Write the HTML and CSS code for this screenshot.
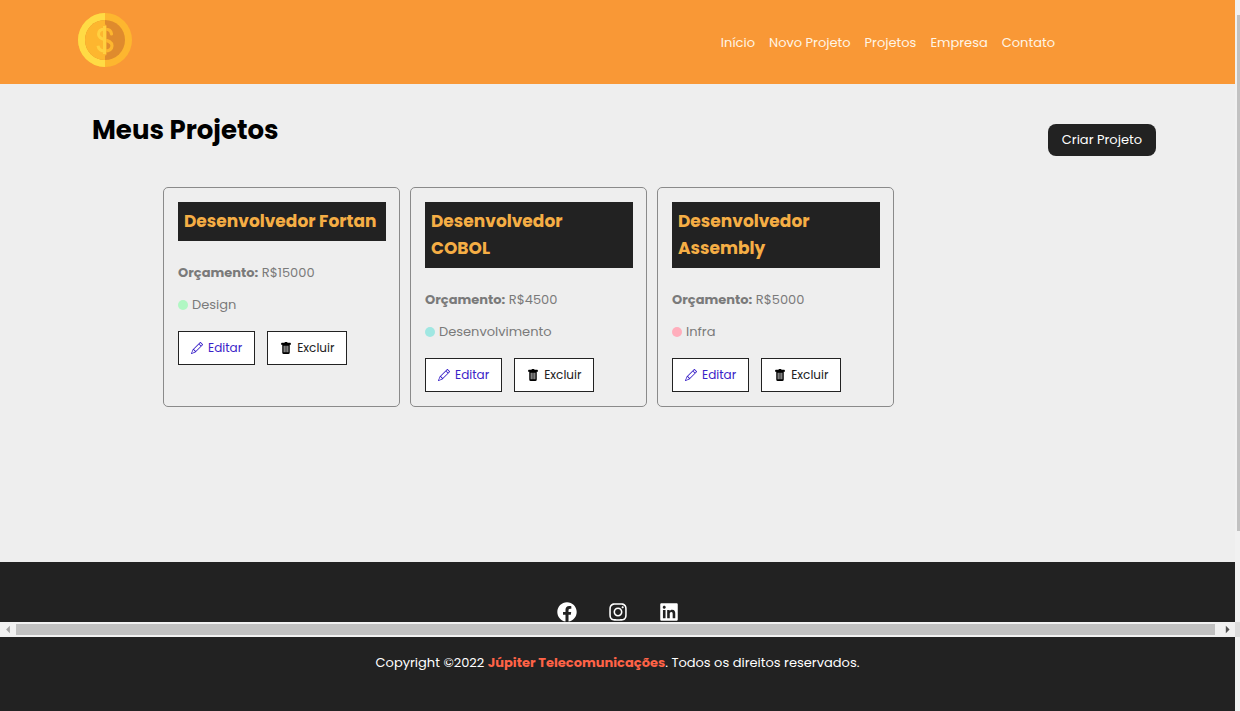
FILE: index.html
```html
<!DOCTYPE html>
<html lang="pt-BR">
<head>
<meta charset="utf-8">
<title>Costs</title>
<link rel="stylesheet" href="styles.css">
</head>
<body>
<svg class="sprite" aria-hidden="true">
  <symbol id="pencil" viewBox="0 0 16 16"><path d="M12.146.146a.5.5 0 0 1 .708 0l3 3a.5.5 0 0 1 0 .708l-10 10a.5.5 0 0 1-.168.11l-5 2a.5.5 0 0 1-.65-.65l2-5a.5.5 0 0 1 .11-.168l10-10zM11.207 2.5 13.5 4.793 14.793 3.5 12.5 1.207 11.207 2.5zm1.586 3L10.5 3.207 4 9.707V10h.5a.5.5 0 0 1 .5.5v.5h.5a.5.5 0 0 1 .5.5v.5h.293l6.5-6.5zm-9.761 5.175-.106.106-1.528 3.821 3.821-1.528.106-.106A.5.5 0 0 1 5 12.5V12h-.5a.5.5 0 0 1-.5-.5V11h-.5a.5.5 0 0 1-.468-.325z"/></symbol>
  <symbol id="trash" viewBox="0 0 16 16"><path d="M2.500 1a1 1 0 0 0-1 1v1.500h1.500V14a2 2 0 0 0 2 2h6a2 2 0 0 0 2-2V3.500h1.500V2a1 1 0 0 0-1-1H10a1 1 0 0 0-1-1H7a1 1 0 0 0-1 1zM5 5h1v8.500H5zM7.500 5h1v8.500h-1zM10 5h1v8.500h-1z" fill-rule="evenodd"/></symbol>
</svg>
<div class="window">
  <div class="page">
    <header class="navbar">
      <a class="logo" href="#" aria-label="Costs">
        <svg viewBox="0 0 54 54" width="54" height="54">
          <circle cx="27" cy="27" r="27" fill="#fdb62f"/>
          <path d="M27 0a27 27 0 0 0 0 54z" fill="#ffdb45"/>
          <circle cx="27" cy="27" r="20" fill="#df8b2d"/>
          <path d="M27 7a20 20 0 0 0 0 40z" fill="#fdb62f"/>
          <path d="M33.500 21C33 17.500 30.500 16 27 16c-4 0-6.500 2-6.500 5.200 0 7.300 13.500 4.300 13.500 11.600 0 3.200-2.800 5.200-7 5.200-4 0-6.500-2-7-5.300M27 13v28" fill="none" stroke="#fdb62f" stroke-width="3.200" stroke-linecap="round"/>
          <path d="M27 16c-4 0-6.500 2-6.500 5.200 0 3.700 3.500 4.700 6.500 5.600M27 38c-4 0-6.500-2-7-5.300M26.500 13v28" fill="none" stroke="#ffd040" stroke-width="3"/>
        </svg>
      </a>
      <nav class="menu">
        <a href="#">Início</a>
        <a href="#">Novo Projeto</a>
        <a href="#">Projetos</a>
        <a href="#">Empresa</a>
        <a href="#">Contato</a>
      </nav>
    </header>
    <main class="content">
      <div class="title-row">
        <h1 class="title">Meus Projetos</h1>
        <a class="create" href="#">Criar Projeto</a>
      </div>
      <div class="cards">
        <article class="card">
          <h2 class="card-title">Desenvolvedor Fortan</h2>
          <p class="budget"><strong>Orçamento:</strong> R$15000</p>
          <p class="category"><span class="dot design"></span>Design</p>
          <div class="actions">
            <a class="action edit" href="#"><svg class="icon"><use href="#pencil"/></svg>Editar</a>
            <button class="action" type="button"><svg class="icon"><use href="#trash"/></svg>Excluir</button>
          </div>
        </article>
        <article class="card">
          <h2 class="card-title">Desenvolvedor<br>COBOL</h2>
          <p class="budget"><strong>Orçamento:</strong> R$4500</p>
          <p class="category"><span class="dot development"></span>Desenvolvimento</p>
          <div class="actions">
            <a class="action edit" href="#"><svg class="icon"><use href="#pencil"/></svg>Editar</a>
            <button class="action" type="button"><svg class="icon"><use href="#trash"/></svg>Excluir</button>
          </div>
        </article>
        <article class="card">
          <h2 class="card-title">Desenvolvedor<br>Assembly</h2>
          <p class="budget"><strong>Orçamento:</strong> R$5000</p>
          <p class="category"><span class="dot infra"></span>Infra</p>
          <div class="actions">
            <a class="action edit" href="#"><svg class="icon"><use href="#pencil"/></svg>Editar</a>
            <button class="action" type="button"><svg class="icon"><use href="#trash"/></svg>Excluir</button>
          </div>
        </article>
      </div>
    </main>
    <footer class="footer">
      <div class="social">
        <a href="#" aria-label="Facebook"><svg viewBox="0 0 512 512" width="20" height="20"><path d="M504 256C504 119 393 8 256 8S8 119 8 256c0 123.780 90.690 226.380 209.250 245V327.690h-63V256h63v-54.640c0-62.150 37-96.480 93.670-96.480 27.140 0 55.520 4.840 55.520 4.840v61h-31.280c-30.800 0-40.410 19.120-40.410 38.730V256h68.780l-11 71.690h-57.780V501C413.310 482.380 504 379.780 504 256z"/></svg></a>
        <a href="#" aria-label="Instagram"><svg viewBox="0 0 448 512" width="20" height="20"><path d="M224.100 141c-63.600 0-114.900 51.300-114.900 114.900s51.300 114.900 114.900 114.900S339 319.500 339 255.900 287.700 141 224.100 141zm0 189.600c-41.100 0-74.700-33.500-74.700-74.700s33.500-74.700 74.700-74.700 74.700 33.500 74.700 74.700-33.600 74.700-74.700 74.700zm146.400-194.300c0 14.900-12 26.800-26.800 26.800-14.900 0-26.800-12-26.800-26.800s12-26.800 26.800-26.800 26.800 12 26.800 26.800zm76.100 27.200c-1.700-35.900-9.900-67.700-36.200-93.900-26.200-26.200-58-34.400-93.900-36.200-37-2.100-147.900-2.100-184.900 0-35.800 1.700-67.600 9.900-93.900 36.100s-34.400 58-36.200 93.900c-2.100 37-2.100 147.900 0 184.900 1.700 35.900 9.900 67.700 36.200 93.900s58 34.400 93.900 36.200c37 2.100 147.900 2.100 184.900 0 35.900-1.700 67.700-9.900 93.900-36.200 26.200-26.200 34.400-58 36.200-93.900 2.100-37 2.100-147.800 0-184.800zM398.800 388c-7.800 19.600-22.900 34.700-42.600 42.600-29.500 11.700-99.500 9-132.100 9s-102.700 2.600-132.100-9c-19.600-7.800-34.700-22.900-42.600-42.600-11.700-29.500-9-99.500-9-132.100s-2.600-102.700 9-132.100c7.800-19.600 22.900-34.700 42.600-42.600 29.500-11.700 99.500-9 132.100-9s102.700-2.600 132.100 9c19.600 7.800 34.700 22.900 42.600 42.600 11.700 29.500 9 99.500 9 132.100s2.700 102.700-9 132.100z"/></svg></a>
        <a href="#" aria-label="LinkedIn"><svg viewBox="0 0 448 512" width="20" height="20"><path d="M416 32H31.900C14.300 32 0 46.500 0 64.300v383.400C0 465.500 14.300 480 31.900 480H416c17.600 0 32-14.500 32-32.300V64.300c0-17.800-14.400-32.300-32-32.300zM135.400 416H69V202.200h66.500V416zm-33.200-243c-21.300 0-38.500-17.300-38.500-38.500S80.900 96 102.200 96c21.200 0 38.500 17.300 38.500 38.500 0 21.300-17.200 38.500-38.500 38.500zm282.100 243h-66.400V312c0-24.800-.5-56.700-34.500-56.700-34.600 0-39.900 27-39.900 54.900V416h-66.400V202.200h63.700v29.200h.9c8.900-16.800 30.600-34.500 62.900-34.500 67.200 0 79.700 44.300 79.700 101.900V416z"/></svg></a>
      </div>
      <p class="copyright">Copyright ©2022 <strong>Júpiter Telecomunicações</strong>. Todos os direitos reservados.</p>
    </footer>
  </div>
  <div class="vbar"><div class="vthumb"></div></div>
  <div class="hbar">
    <svg class="arrow" viewBox="0 0 16 16"><path d="M10 4v8L6 8z" fill="#a3a3a3"/></svg>
    <div class="hthumb"></div>
    <svg class="arrow" viewBox="0 0 16 16"><path d="M11 4v8l4-4z" fill="#505050"/></svg>
    <div class="corner"></div>
  </div>
</div>
</body>
</html>
```
FILE: styles.css
```css
* {
  box-sizing: border-box;
  margin: 0;
  padding: 0;
}

body {
  font-family: Poppins, Inter, sans-serif;
  font-size: 13px;
  line-height: 20px;
  background: #eeeeee;
}

a {
  text-decoration: none;
}

.sprite {
  position: absolute;
  width: 0;
  height: 0;
}

.window {
  position: relative;
  display: flex;
  min-height: 100vh;
}

.page {
  flex: 1;
  display: flex;
  flex-direction: column;
}

.navbar {
  display: flex;
  align-items: center;
  justify-content: space-between;
  padding: 13px 180px 17px 78px;
  background: #f99836;
}

.logo,
.logo svg {
  display: block;
}

.menu {
  display: flex;
  gap: 14px;
  padding-top: 6px;
}

.menu a {
  color: #fff5e6;
}

.content {
  flex: 1;
  padding: 24px 79px 48px 92px;
}

.title-row {
  display: flex;
  justify-content: space-between;
  align-items: flex-start;
}

.title {
  font-size: 26px;
  line-height: 44px;
  font-weight: 700;
}

.create {
  margin-top: 16px;
  padding: 6px 14px;
  border-radius: 8px;
  background: #222222;
  color: #ffffff;
}

.cards {
  display: flex;
  flex-wrap: wrap;
  gap: 10px;
  padding: 31px 0 0 71px;
}

.card {
  width: 237px;
  padding: 14px 13px 14px 14px;
  border: 1px solid #8a8a8a;
  border-radius: 5px;
  color: #7a7a7a;
}

.card-title {
  margin-bottom: 22px;
  padding: 6px;
  background: #222222;
  color: #f5ae45;
  font-size: 17px;
  line-height: 27px;
  font-weight: 700;
}

.budget {
  margin-bottom: 12px;
}

.category {
  display: flex;
  align-items: center;
  gap: 4px;
  margin-bottom: 16px;
}

.dot {
  width: 10px;
  height: 10px;
  border-radius: 50%;
}

.design {
  background: #b0f7c3;
}

.development {
  background: #a0e7e2;
}

.infra {
  background: #ffaebc;
}

.actions {
  display: flex;
  gap: 12px;
}

.action {
  display: flex;
  align-items: center;
  gap: 5px;
  height: 34px;
  padding: 0 12px;
  border: 1px solid #222222;
  background: #ffffff;
  color: #222222;
  font: inherit;
  font-size: 12px;
}

.edit {
  color: #3a22c8;
}

.icon {
  width: 12px;
  height: 12px;
  fill: currentColor;
}

button .icon {
  fill: #000000;
}

.footer {
  padding: 40px 0 38px;
  background: #222222;
  color: #ffffff;
  text-align: center;
}

.social {
  display: flex;
  justify-content: center;
  gap: 31px;
  margin-bottom: 31px;
}

.social svg {
  display: block;
  fill: #ffffff;
}

.copyright strong {
  color: #ff6347;
}

.vbar {
  width: 5px;
  padding: 15px 0 180px 2px;
  background: #f1f1f1;
}

.vthumb {
  height: 100%;
  background: #c1c1c1;
}

.hbar {
  position: absolute;
  left: 0;
  right: 0;
  bottom: 74px;
  display: flex;
  height: 15px;
  background: #f1f1f1;
}

.arrow {
  width: 16px;
  height: 15px;
}

.arrow + .corner {
  margin-left: 4px;
}

.hthumb {
  flex: 1;
  margin: 2px 0;
  background: #c1c1c1;
}

.corner {
  width: 5px;
  background: #dcdcdc;
}
```
